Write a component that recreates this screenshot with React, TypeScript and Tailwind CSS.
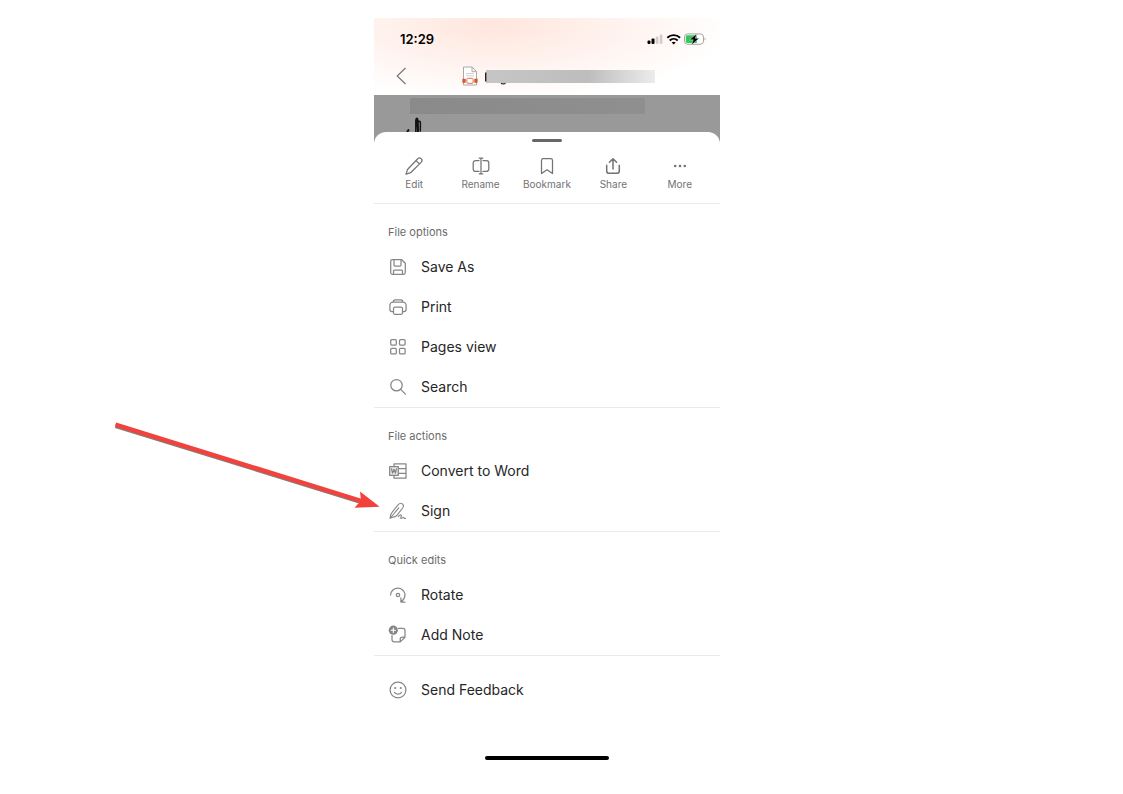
import type { ReactNode } from "react";

type Item = {
  label: string;
  icon: ReactNode;
  highlighted?: boolean;
};

function Icon({ children }: { children: ReactNode }) {
  return (
    <svg
      viewBox="0 0 20 20"
      className="size-5 shrink-0"
      fill="none"
      stroke="currentColor"
      strokeWidth="1.25"
      strokeLinecap="round"
      strokeLinejoin="round"
      aria-hidden="true"
    >
      {children}
    </svg>
  );
}

const tools: Item[] = [
  {
    label: "Edit",
    icon: (
      <Icon>
        <path d="M13.700 2.800a2.300 2.300 0 0 1 3.600 3.300L7.400 16c-.4.400-.8.700-1.300.9l-4.100 1.300 1.300-4.100c.2-.5.500-.9.900-1.300zM12 4.600l3.500 3.400" />
      </Icon>
    ),
  },
  {
    label: "Rename",
    icon: (
      <Icon>
        <path d="M8 4.600H4.600A2.400 2.400 0 0 0 2.200 7v6a2.400 2.400 0 0 0 2.400 2.400H8M12 4.600h3.400A2.400 2.400 0 0 1 17.800 7v6a2.400 2.400 0 0 1-2.400 2.400H12M10 2.200v15.600M8.200 2.200h3.600M8.200 17.800h3.600" />
      </Icon>
    ),
  },
  {
    label: "Bookmark",
    icon: (
      <Icon>
        <path d="M4.500 4.500c0-1 .8-1.800 1.800-1.800h7.400c1 0 1.800.8 1.800 1.800v13.100L10 13.800l-5.500 3.800z" />
      </Icon>
    ),
  },
  {
    label: "Share",
    icon: (
      <Icon>
        <path d="M10 13V2.800M6.400 6.300 10 2.700l3.600 3.600M3.700 9.300v5.600c0 1.300 1 2.400 2.400 2.400h7.800c1.400 0 2.400-1.100 2.400-2.400V9.300" strokeWidth="1.500" />
      </Icon>
    ),
  },
  {
    label: "More",
    icon: (
      <Icon>
        <g fill="currentColor" stroke="none">
          <circle cx="5.200" cy="10" r="1.300" />
          <circle cx="10" cy="10" r="1.300" />
          <circle cx="14.800" cy="10" r="1.300" />
        </g>
      </Icon>
    ),
  },
];

const fileOptions: Item[] = [
  {
    label: "Save As",
    icon: (
      <Icon>
        <path d="M4.200 2.700h9.500l3.600 3.500v9.300c0 1-.8 1.800-1.800 1.800H4.500c-1 0-1.800-.8-1.800-1.800V4.300c0-.9.600-1.600 1.500-1.600z" />
        <path d="M6 2.800v5.200c0 .6.400 1 1 1h5c.6 0 1-.4 1-1V2.800M5.500 17.200v-3c0-.6.400-1 1-1h7c.6 0 1 .4 1 1v3" />
      </Icon>
    ),
  },
  {
    label: "Print",
    icon: (
      <Icon>
        <path d="M5.400 14.600H4A2.100 2.100 0 0 1 1.900 12.500V8.200A3 3 0 0 1 4.900 5.200h10.200a3 3 0 0 1 3 3v4.300a2.100 2.100 0 0 1-2.100 2.100h-1.400M5.200 5c0-1.300.7-2.200 2-2.200h5.600c1.300 0 2 .9 2 2.200" />
        <rect x="5.500" y="10" width="9" height="7.300" rx="1.500" />
      </Icon>
    ),
  },
  {
    label: "Pages view",
    icon: (
      <Icon>
        <rect x="2.700" y="2.700" width="5.600" height="5.400" rx="1" />
        <rect x="11.500" y="2.700" width="5.600" height="5.400" rx="1" />
        <rect x="2.700" y="11.300" width="5.600" height="5.600" rx="1" />
        <rect x="11.500" y="11.300" width="5.600" height="5.600" rx="1" />
      </Icon>
    ),
  },
  {
    label: "Search",
    icon: (
      <Icon>
        <circle cx="8.500" cy="8.200" r="5.700" />
        <path d="m12.700 12.400 4.700 4.700" />
      </Icon>
    ),
  },
];

const fileActions: Item[] = [
  {
    label: "Convert to Word",
    icon: (
      <Icon>
        <path d="M6 5.500V2.800h12v14.400H6v-2.700M10.500 7.500H18M10.500 12.400H18" />
        <rect x="1.700" y="5.600" width="8.600" height="8.800" fill="#e9e9e9" />
        <path d="m3.500 7.900 1.100 4.200L6 8.300 7.400 12.100l1.100-4.200" />
      </Icon>
    ),
  },
  {
    label: "Sign",
    icon: (
      <Icon>
        <path
          d="M2.200 17.300c-.1-2.200.5-4.300 2-6.200L10.300 3.700c1.200-1.500 2.800-1.700 4-.8s1.400 2.600.3 4.100L8.900 14.400c-.9 1.200-2.300 1.700-4.300 1.900zM2 17.500l8.800-10.700M10.300 15.700c1.200-1.500 2.500-2.300 3-1.700.7.800-1.200 2.600-.4 3.300.8.600 1.800-1.300 2.600-.9.700.3.300 1.200 2.100 1.100"
          strokeWidth="1.100"
        />
      </Icon>
    ),
    highlighted: true,
  },
];

const quickEdits: Item[] = [
  {
    label: "Rotate",
    icon: (
      <Icon>
        <path d="M2.500 10A7.300 7.300 0 0 1 17 9.200c0 3-1.500 5.800-4 7.400M12.900 12.800v4.300h4.100" />
        <circle cx="10" cy="10" r="1.700" />
      </Icon>
    ),
  },
  {
    label: "Add Note",
    icon: (
      <Icon>
        <path d="M10.300 3.400h4.600c1.200 0 2.100.9 2.100 2.100v6.700l-4.800 4.700H6.100A2.100 2.100 0 0 1 4 14.800v-4.300M17 12.100h-2.700c-1.200 0-2.100.9-2.100 2.100v2.700" />
        <circle cx="5.300" cy="5.200" r="4.600" fill="currentColor" stroke="none" />
        <path d="M5.300 3v4.400M3.100 5.200h4.400" stroke="#fff" strokeWidth="1.100" />
      </Icon>
    ),
  },
];

const feedback: Item[] = [
  {
    label: "Send Feedback",
    icon: (
      <Icon>
        <circle cx="10" cy="10" r="7.900" />
        <path d="M6.500 12.300c1.900 2.300 5.100 2.300 7 0" />
        <g fill="currentColor" stroke="none">
          <circle cx="7.200" cy="8" r="1.100" />
          <circle cx="12.800" cy="8" r="1.100" />
        </g>
      </Icon>
    ),
  },
];

function StatusBar() {
  return (
    <div className="flex h-[42px] items-center justify-between pl-[26px] pr-[14px] text-black">
      <span className="pt-px text-[13px] font-semibold">12:29</span>
      <svg viewBox="0 0 60 12" className="h-3 w-[60px]" aria-hidden="true">
        <rect x="1.500" y="7.500" width="3" height="3.500" rx="1" />
        <rect x="5.500" y="5.500" width="3" height="5.500" rx="1" />
        <rect x="9.700" y="3.500" width="2.700" height="7.500" rx="1" fill="#d3cdcb" />
        <rect x="13.700" y="1.500" width="2.700" height="9.500" rx="1" fill="#d3cdcb" />
        <g fill="none" stroke="#000" strokeWidth="1.900">
          <path d="M21.300 4.700c3.600-3.500 9.200-3.500 12.800 0" />
          <path d="M23.700 7.500c2.300-2.200 5.700-2.200 8 0" />
        </g>
        <path d="m27.700 11.600-2-2.100c1.200-1.100 2.800-1.100 4 0z" />
        <rect x="38.500" y=".9" width="19" height="10.400" rx="3.200" fill="#fff" stroke="#a6a29f" />
        <path d="M41.500 2.200h9.300V10h-9.300c-1 0-1.700-.7-1.700-1.700V3.900c0-1 .7-1.700 1.700-1.700z" fill="#35c759" />
        <path d="M58.600 4.600c1.300.4 1.300 2.500 0 2.900z" fill="#a6a29f" />
        <path d="m50.700.7-7.200 6.100h3.800L45.400 12l7.800-6.700h-3.900z" stroke="#fff" strokeWidth=".4" />
      </svg>
    </div>
  );
}

function TitleBar() {
  return (
    <div className="flex h-[35px] items-center pb-[3px] pl-[21px] pr-[65px]">
      <button type="button" aria-label="Back" className="mr-[55px] text-[#777]">
        <svg viewBox="0 0 12 20" className="h-5 w-3" fill="none" stroke="currentColor" strokeWidth="1.200" aria-hidden="true">
          <path d="M10.500 2 2.200 10l8.300 8" />
        </svg>
      </button>
      <svg viewBox="0 0 16 20" className="h-5 w-4 shrink-0" fill="none" aria-hidden="true">
        <path d="M1.500 1h8.700l4.300 4.500V19h-13zM10 1v4.700h4.500" fill="#fff" stroke="#aaa" />
        <path d="M4 7.500h8M4 9.800h8" stroke="#d0d0d0" />
        <path d="M.4 12.800h3.300v4H.4zM12.300 12.800h3.300v4h-3.300z" fill="#d9532c" />
        <rect x="4.900" y="12.300" width="6.200" height="5" rx="1" fill="#fff" stroke="#d9705a" />
      </svg>
      {/* file name is redacted */}
      <div className="relative ml-2 h-[13px] flex-1 bg-linear-to-r from-[#c6c6c6] via-[#bcbdbc] via-60% to-[#ececec]">
        <svg viewBox="0 0 24 16" className="absolute -left-px top-0 h-4 w-6" aria-hidden="true">
          <path d="M.7 2.500v9" stroke="#222" strokeWidth="1.400" />
          <path d="M16 13.200c1 .9 3.600.9 4.500 0" stroke="#222" strokeWidth="1.200" fill="none" />
        </svg>
      </div>
    </div>
  );
}

function DocumentPreview() {
  return (
    <div className="h-[49px] bg-[#999] pl-9 pr-[75px] pt-[3px]">
      <div className="h-4 bg-linear-to-r from-[#8a8a8a] to-[#8f8f8f]" />
      <svg viewBox="0 0 20 20" className="-ml-1 mt-[3px] h-5 w-5" fill="none" stroke="#111" strokeLinecap="round" aria-hidden="true">
        <path d="M1.500 14.500 2.500 13" strokeWidth="2" />
        <path d="M9.800 16 9.800 3.500c.2-3 2-3 2.200.2l.3 12.300M10.800 2l1 14M12.300 5c.8-1.300 2-1 2.100.5L14.300 14" strokeWidth="1.500" />
      </svg>
    </div>
  );
}

function Arrow() {
  return (
    <svg
      viewBox="0 0 270 95"
      className="pointer-events-none absolute bottom-[18px] right-full h-[95px] w-[270px] translate-x-1.5"
      aria-hidden="true"
    >
      <path d="m5.500 8 244 75.500" stroke="#8d7774" strokeWidth="4" />
      <path d="m5.500 6.500 246 76.500" stroke="#f3423b" strokeWidth="4.300" />
      <path d="m250 73.500 19.700 15.200-25.200 1.100 6.500-7.300z" fill="#f3423b" />
    </svg>
  );
}

function Section({ title, items }: { title?: string; items: Item[] }) {
  return (
    <section className="border-t border-[#ebebeb]">
      {title ? (
        <h2 className="px-[14px] pb-[6px] pt-[19px] text-[11px] leading-[18px] text-[#6b6b6b]">{title}</h2>
      ) : (
        <div className="h-[14px]" />
      )}
      <ul>
        {items.map((item) => (
          <li key={item.label} className="relative">
            <button
              type="button"
              className="flex h-10 w-full items-center gap-[13px] px-[14px] text-left text-sm text-[#262626]"
            >
              <span className="text-[#868686]">{item.icon}</span>
              {item.label}
            </button>
            {item.highlighted && <Arrow />}
          </li>
        ))}
      </ul>
    </section>
  );
}

export default function App() {
  return (
    <div className="min-h-screen bg-white pr-[29px] pt-[18px] font-['Inter',sans-serif]">
      <main className="mx-auto max-w-[346px]">
        <header className="bg-[radial-gradient(ellipse_at_35%_10%,#ffe6dd_0%,#fff3ef_40%,#ffffff00_75%)]">
          <StatusBar />
          <TitleBar />
        </header>
        <DocumentPreview />
        <div className="relative -mt-3 rounded-t-xl bg-white pb-[34px]">
          <div className="mx-auto w-[30px] pt-[7px]">
            <div className="h-[3px] rounded-full bg-[#666]" />
          </div>
          <nav className="grid grid-cols-5 px-[7px] pb-[10px] pt-[14px]">
            {tools.map((tool) => (
              <button
                key={tool.label}
                type="button"
                className="flex flex-col items-center text-[10px] leading-4 text-[#737373]"
              >
                {tool.icon}
                {tool.label}
              </button>
            ))}
          </nav>
          <div className="pt-px">
            <Section title="File options" items={fileOptions} />
            <Section title="File actions" items={fileActions} />
            <Section title="Quick edits" items={quickEdits} />
            <Section items={feedback} />
          </div>
          <div className="mx-auto mt-[46px] h-1 w-[124px] rounded-full bg-black" />
        </div>
      </main>
    </div>
  );
}
